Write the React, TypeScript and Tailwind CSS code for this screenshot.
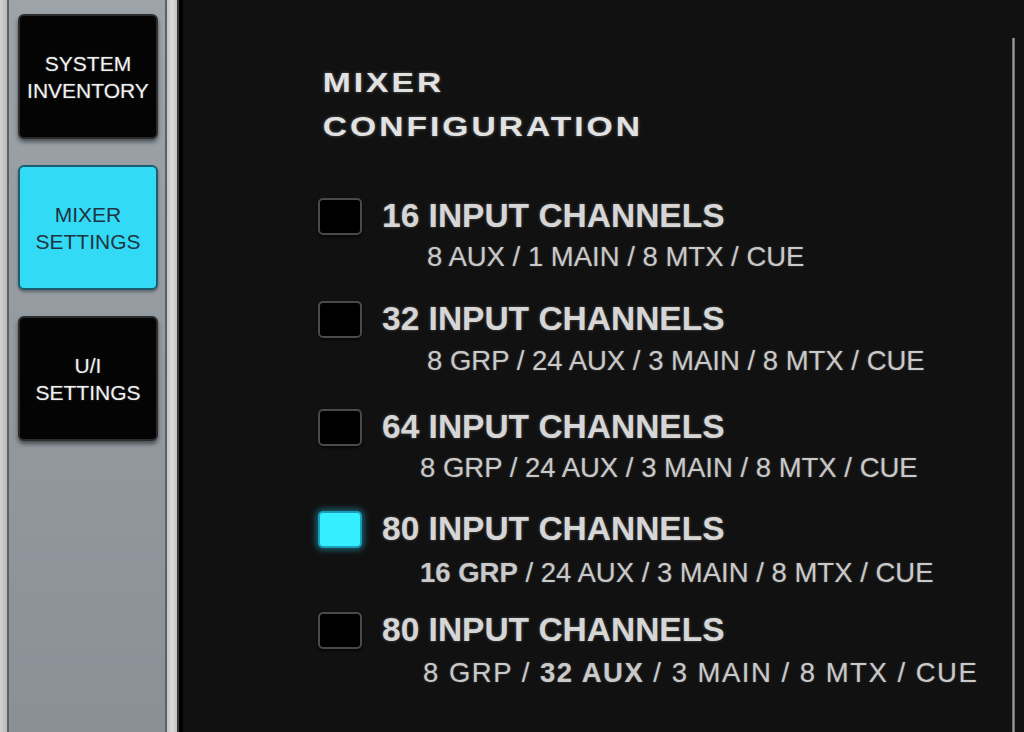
import React from "react";

type Row = {
  title: string;
  sub: React.ReactNode;
  checked?: boolean;
  mt: string;
  subMt: string;
  indent: string;
  track?: string;
};

const rows: Row[] = [
  {
    title: "16 INPUT CHANNELS",
    sub: <>8 AUX / 1 MAIN / 8 MTX / CUE</>,
    mt: "mt-[48px]",
    subMt: "mt-[6px]",
    indent: "ml-[45px]",
  },
  {
    title: "32 INPUT CHANNELS",
    sub: <>8 GRP / 24 AUX / 3 MAIN / 8 MTX / CUE</>,
    mt: "mt-[27px]",
    subMt: "mt-[7px]",
    indent: "ml-[45px]",
  },
  {
    title: "64 INPUT CHANNELS",
    sub: <>8 GRP / 24 AUX / 3 MAIN / 8 MTX / CUE</>,
    mt: "mt-[31px]",
    subMt: "mt-[6px]",
    indent: "ml-[38px]",
  },
  {
    title: "80 INPUT CHANNELS",
    sub: (
      <>
        <span className="font-bold">16 GRP</span> / 24 AUX / 3 MAIN / 8 MTX / CUE
      </>
    ),
    checked: true,
    mt: "mt-[26px]",
    subMt: "mt-[9px]",
    indent: "ml-[38px]",
  },
  {
    title: "80 INPUT CHANNELS",
    sub: (
      <>
        8 GRP / <span className="font-bold">32 AUX</span> / 3 MAIN / 8 MTX / CUE
      </>
    ),
    mt: "mt-[22px]",
    subMt: "mt-[8px]",
    indent: "ml-[41px]",
    track: "tracking-[1.5px]",
  },
];

function NavButton({
  lines,
  active,
}: {
  lines: string[];
  active?: boolean;
}) {
  return (
    <div
      className={
        active
          ? "w-[140px] h-[125px] rounded-[6px] border-2 border-[#1d5d72] bg-[#33daf6] flex flex-col items-center justify-center text-[21px] leading-[27px] text-[#1f3440] shadow-[0_2px_3px_rgba(0,0,0,0.35)]"
          : "w-[140px] h-[125px] rounded-[6px] border-2 border-[#2a2c2e] bg-[#040404] flex flex-col items-center justify-center text-[21px] leading-[27px] text-[#f2f2f2] shadow-[0_3px_4px_rgba(0,0,0,0.5)] [text-shadow:0_0_2px_rgba(255,255,255,0.35)]"
      }
    >
      {lines.map((l) => (
        <div key={l}>{l}</div>
      ))}
    </div>
  );
}

export default function App() {
  return (
    <div className="w-[1024px] h-[732px] overflow-hidden flex font-['Liberation_Sans',Arial,sans-serif]">
      {/* outer light strip */}
      <div className="w-[7px] h-full bg-gradient-to-r from-[#d2d2d2] to-[#b9b9b9]" />
      {/* side panel */}
      <div className="w-[160px] h-full border-x-2 border-[#5a6166] bg-gradient-to-b from-[#9ca4aa] to-[#8a9096] flex flex-col pt-[14px] pl-[9px] gap-[26px]">
        <NavButton lines={["SYSTEM", "INVENTORY"]} />
        <NavButton lines={["MIXER", "SETTINGS"]} active />
        <NavButton lines={["U/I", "SETTINGS"]} />
      </div>
      {/* light rail */}
      <div className="w-[10px] h-full bg-gradient-to-r from-[#c4c4c4] via-[#dadada] to-[#c2c2c2]" />
      <div className="w-[2px] h-full bg-[#3a3a3a]" />
      <div className="w-[4px] h-full bg-[#000000]" />
      {/* main area */}
      <div className="flex-1 h-full bg-[#111111] flex">
        <div className="flex-1 pl-[135px] pt-[61px]">
          <div className="pl-[4px] text-[28px] leading-[44px] font-bold text-[#e2e2e2] tracking-[2.5px] origin-left scale-x-[1.2] [text-shadow:0_0_3px_rgba(255,255,255,0.35)]">
            <div>MIXER</div>
            <div>CONFIGURATION</div>
          </div>
          {rows.map((r, i) => (
            <div key={i} className={r.mt}>
              <div className="flex items-start">
                <div
                  className={
                    r.checked
                      ? "mt-[1px] w-[44px] h-[37px] rounded-[5px] border-2 border-[#1a9fb8] bg-[#33efff] shadow-[0_0_6px_2px_rgba(40,200,240,0.45)]"
                      : "mt-[1px] w-[44px] h-[37px] rounded-[5px] border-2 border-[#4a4a4a] bg-[#000000] shadow-[0_2px_3px_rgba(0,0,0,0.6)]"
                  }
                />
                <div className="ml-[20px] text-[33.5px] leading-[38px] font-bold text-[#d6d6d6] [text-shadow:0_0_3px_rgba(255,255,255,0.3)]">
                  {r.title}
                </div>
              </div>
              <div
                className={`${r.indent} ${r.subMt} ${r.track ?? ""} pl-[64px] text-[27.5px] leading-[32px] text-[#c9c9c9] [text-shadow:0_0_2px_rgba(255,255,255,0.3)]`}
              >
                {r.sub}
              </div>
            </div>
          ))}
        </div>
        <div className="w-[3px] mt-[38px] mr-[9px] bg-gradient-to-r from-[#5a5a5a] via-[#9a9a9a] to-[#5a5a5a]" />
      </div>
    </div>
  );
}
